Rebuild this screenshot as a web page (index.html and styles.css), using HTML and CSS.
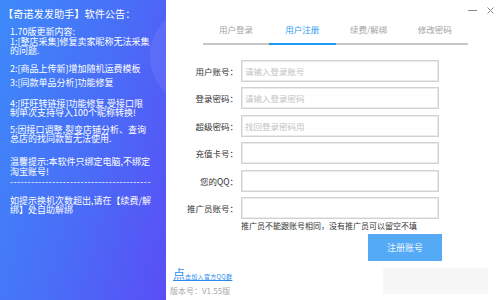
FILE: index.html
```html
<!DOCTYPE html>
<html lang="zh-CN">
<head>
<meta charset="utf-8">
<title>奇诺发发助手</title>
<link rel="stylesheet" href="styles.css">
</head>
<body>
<div class="app">
  <aside class="notice">
    <h1 class="notice-title">【奇诺发发助手】软件公告：</h1>
    <p class="note note-1">1.70版更新内容:<br>1:[整店采集]修复卖家昵称无法采集<br>的问题.</p>
    <p class="note note-2">2:[商品上传新]增加随机运费模板</p>
    <p class="note note-3">3:[同款单品分析]功能修复</p>
    <p class="note note-4">4:[旺旺转链接]功能修复,受接口限<br>制单次支持导入100个昵称转换!</p>
    <p class="note note-5">5:因接口调整,裂变店铺分析、查询<br>总店的找同款暂无法使用.</p>
    <p class="note note-6">温馨提示:本软件只绑定电脑,不绑定<br>淘宝账号!</p>
    <p class="note note-dash">----------------------------------------</p>
    <p class="note note-7">如提示换机次数超出,请在【续费/解<br>绑】处自助解绑</p>
  </aside>
  <main class="panel">
    <div class="winbar">
      <svg class="win-btn" width="9" height="9" viewBox="0 0 9 9"><line x1="0" y1="4.5" x2="9" y2="4.5" stroke="#8a8a8a" stroke-width="1"/></svg>
      <svg class="win-btn" width="7" height="7" viewBox="0 0 7 7"><path d="M0.5 0.5L6.5 6.5M6.5 0.5L0.5 6.5" stroke="#8a8a8a" stroke-width="1"/></svg>
    </div>
    <nav class="tabs">
      <span class="tab">用户登录</span>
      <span class="tab tab-active">用户注册</span>
      <span class="tab">续费/解绑</span>
      <span class="tab">修改密码</span>
    </nav>
    <form class="form">
      <label class="form-label">用户账号：</label>
      <input class="form-input" type="text" placeholder="请输入登录账号">
      <label class="form-label">登录密码：</label>
      <input class="form-input" type="text" placeholder="请输入登录密码">
      <label class="form-label">超级密码：</label>
      <input class="form-input" type="text" placeholder="找回登录密码用">
      <label class="form-label">充值卡号：</label>
      <input class="form-input" type="text">
      <label class="form-label">您的QQ：</label>
      <input class="form-input" type="text">
      <label class="form-label">推广员账号：</label>
      <input class="form-input" type="text">
    </form>
    <p class="hint">推广员不能跟账号相同，没有推广员可以留空不填</p>
    <button class="submit" type="button">注册账号</button>
    <div class="foot">
      <div class="foot-info">
        <a class="link">点<span class="link-rest">击加入官方QQ群</span></a>
        <span class="version">版本号：V1.55版</span>
      </div>
      <div class="foot-block"></div>
    </div>
  </main>
</div>
</body>
</html>
```

FILE: styles.css
```css
html, body {
  margin: 0;
  padding: 0;
}
body {
  width: 500px;
  height: 300px;
  overflow: hidden;
  font-family: "Noto Sans CJK SC", "Noto Sans", sans-serif;
  background: #fff;
}
.app {
  display: flex;
  width: 500px;
  height: 300px;
}

/* left notice panel */
.notice {
  position: relative;
  flex: none;
  width: 166px;
  height: 300px;
  box-sizing: border-box;
  padding-top: 7px;
  overflow: hidden;
  color: #fff;
  background: linear-gradient(105deg, #3d8afa 0%, #4a6cf7 55%, #5a4ef5 100%);
}
.notice::before {
  content: "";
  position: absolute;
  left: 150px;
  top: 6px;
  width: 100px;
  height: 100px;
  border-radius: 50%;
  background: rgba(255, 255, 255, 0.07);
}
.notice-title {
  position: relative;
  margin: 0 0 0 3px;
  font-size: 10.2px;
  line-height: 14px;
  font-weight: normal;
  white-space: nowrap;
}
.note {
  position: relative;
  margin: 6px 0 0 10px;
  font-size: 9px;
  line-height: 10px;
  white-space: nowrap;
}
.note-1 { margin-top: 6px; line-height: 9.5px; }
.note-2 { margin-top: 8px; }
.note-3 { margin-top: 4px; }
.note-4 { margin-top: 11px; line-height: 9.5px; }
.note-5 { margin-top: 7px; line-height: 9.5px; }
.note-6 { margin-top: 13px; }
.note-dash {
  margin-top: 0;
  letter-spacing: 0.4px;
}
.note-7 { margin-top: 9px; line-height: 9.5px; }

/* right panel */
.panel {
  flex: 1;
  display: flex;
  flex-direction: column;
  background: #fff;
}
.winbar {
  height: 17px;
  box-sizing: border-box;
  padding: 3px 6px 0 0;
  display: flex;
  justify-content: flex-end;
  align-items: center;
  gap: 10px;
}
.win-btn { display: block; }

.tabs {
  display: flex;
  width: 265px;
  height: 28px;
  margin-left: 37px;
}
.tab {
  flex: 1;
  box-sizing: border-box;
  height: 28px;
  padding-bottom: 2px;
  line-height: 24px;
  text-align: center;
  font-size: 8.5px;
  color: #a3a3a3;
  border-bottom: 2px solid #c6c6c6;
}
.tab-active {
  color: #2a9df4;
  border-bottom-color: #1f9bf3;
}

.form {
  margin: 15px 0 0 0;
  display: grid;
  grid-template-columns: 72px 198px;
  grid-auto-rows: 22px;
  column-gap: 3px;
  row-gap: 5.4px;
}
.form-label {
  text-align: right;
  font-size: 8.5px;
  line-height: 22px;
  color: #333;
  white-space: nowrap;
}
.form-input {
  box-sizing: border-box;
  width: 198px;
  height: 22px;
  margin: 0;
  padding: 0 0 0 3px;
  border: 1px solid #d2d2d2;
  box-shadow: inset 0 0 0 1px #ebebeb;
  font-family: inherit;
  font-size: 8.5px;
  color: #333;
  outline: none;
  background: #fff;
}
.form-input::placeholder {
  color: #c2c2c2;
}

.hint {
  margin: 2px 0 0 75px;
  font-size: 8px;
  line-height: 10px;
  color: #333;
  white-space: nowrap;
}

.submit {
  width: 74px;
  height: 27px;
  margin: 3px 0 0 202px;
  padding: 0;
  border: none;
  background: #55aaf6;
  color: #eaf4ff;
  font-family: inherit;
  font-size: 9px;
}

.foot {
  display: flex;
  margin-top: 6px;
}
.foot-info {
  width: 217px;
  box-sizing: border-box;
  padding-left: 4px;
  display: flex;
  flex-direction: column;
}
.link {
  margin-left: 3px;
  color: #2b8cf0;
  font-size: 12px;
  line-height: 13px;
  text-decoration: underline;
  white-space: nowrap;
}
.link-rest {
  font-size: 6px;
  letter-spacing: 0.3px;
}
.version {
  margin-top: 3px;
  font-size: 8px;
  line-height: 10px;
  color: #a8a8a8;
  white-space: nowrap;
}
.foot-block {
  width: 105px;
  height: 26px;
  margin-top: 1px;
  background: #f7f7f7;
}
```
